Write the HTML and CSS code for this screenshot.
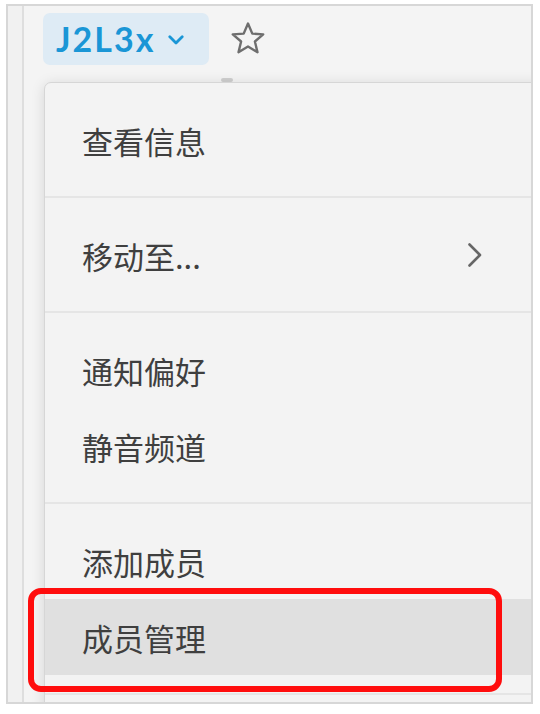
FILE: index.html
```html
<!DOCTYPE html>
<html lang="zh-CN">
<head>
<meta charset="utf-8">
<title>Channel menu</title>
<link rel="stylesheet" href="styles.css">
</head>
<body>
<div class="frame">
  <div class="layout">
    <div class="rail"></div>
    <div class="main">
      <div class="header">
        <div class="chip">
          <span class="chip-name">J2L3x</span>
          <svg class="chip-caret" width="16" height="10" viewBox="0 0 16 10"><path d="M1.8 1.8 L8 8 L14.2 1.8" fill="none" stroke="#1a96d6" stroke-width="2.8" stroke-linecap="round" stroke-linejoin="round"/></svg>
        </div>
        <svg class="star" width="36" height="34" viewBox="0 0 36 34"><path d="M18 2.5 L22.3 12.6 L33.2 13.4 L24.9 20.5 L27.5 31.2 L18 25.5 L8.5 31.2 L11.1 20.5 L2.8 13.4 L13.7 12.6 Z" fill="none" stroke="#6e6e6e" stroke-width="2.4" stroke-linejoin="round"/></svg>
      </div>
    </div>
  </div>
  <div class="tick"></div>
  <div class="menu">
    <div class="section">
      <div class="item">查看信息</div>
    </div>
    <div class="section">
      <div class="item">移动至...
        <svg class="chev" width="16" height="26" viewBox="0 0 16 26"><path d="M2.5 2.5 L13 13 L2.5 23.5" fill="none" stroke="#666" stroke-width="2.6" stroke-linecap="round" stroke-linejoin="round"/></svg>
      </div>
    </div>
    <div class="section">
      <div class="item">通知偏好</div>
      <div class="item">静音频道</div>
    </div>
    <div class="section">
      <div class="item">添加成员</div>
      <div class="item item-active">成员管理</div>
    </div>
    <div class="section"></div>
  </div>
  <div class="callout"></div>
</div>
</body>
</html>
```
FILE: styles.css
```css
html, body {
  margin: 0;
  padding: 0;
  background: #ffffff;
}

body {
  font-family: "Noto Sans CJK SC", "Noto Sans", sans-serif;
}

.frame {
  position: relative;
  box-sizing: border-box;
  margin: 4px 0 0 6px;
  width: 527px;
  height: 700px;
  border: 2px solid #d7d7d7;
  background: #f4f4f4;
  overflow: hidden;
}

.layout {
  display: flex;
  height: 100%;
}

.rail {
  width: 14px;
  flex: none;
  background: #f1f1f1;
  border-right: 2px solid #dedede;
}

.main {
  flex: 1;
  padding: 7px 0 0 19px;
}

.header {
  display: flex;
  align-items: center;
  gap: 21px;
}

.chip {
  display: flex;
  align-items: center;
  box-sizing: border-box;
  width: 166px;
  height: 52px;
  padding: 0 0 0 13px;
  border-radius: 7px;
  background: #deebf5;
  gap: 13px;
}

.chip-name {
  font-family: "Lato", "Noto Sans", sans-serif;
  font-weight: 700;
  font-size: 34px;
  line-height: 1;
  color: #1a96d6;
  letter-spacing: 2px;
}

.chip-caret {
  display: block;
  margin-top: 2px;
}

.star {
  display: block;
  margin-top: -2px;
}

.tick {
  position: absolute;
  left: 213px;
  top: 72px;
  width: 12px;
  height: 4px;
  border-radius: 2px;
  background: #cfcfcf;
}

.menu {
  position: absolute;
  left: 36px;
  top: 76px;
  width: 540px;
  background: #f3f3f3;
  border: 1px solid #d6d6d6;
  border-radius: 7px;
  box-shadow: 0 2px 14px rgba(0, 0, 0, 0.13);
}

.section {
  padding: 19px 0 18px;
  border-top: 2px solid #e5e5e5;
}

.section:first-child {
  border-top: none;
}

.item {
  display: flex;
  align-items: center;
  height: 76px;
  padding-left: 37px;
  font-size: 31px;
  color: #3f3f3f;
  position: relative;
}

.item-active {
  background: #e0e0e0;
}

.chev {
  position: absolute;
  left: 422px;
  top: 25px;
}

.callout {
  position: absolute;
  box-sizing: border-box;
  left: 20px;
  top: 582px;
  width: 474px;
  height: 104px;
  border: 6px solid #ff0d0d;
  border-radius: 13px;
}
```
